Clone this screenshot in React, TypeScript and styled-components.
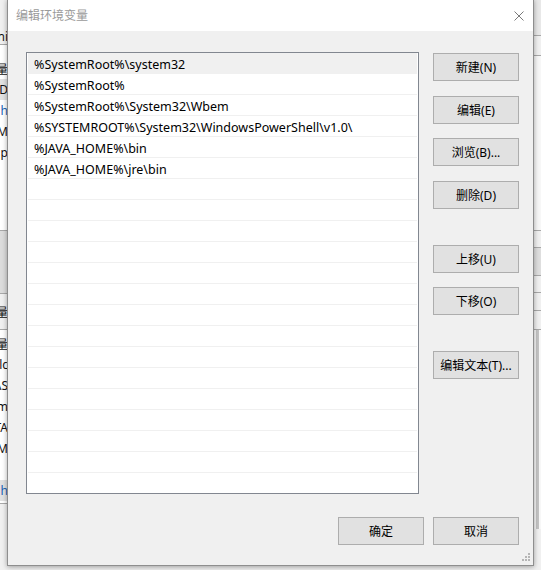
import React from "react";
import styled, { createGlobalStyle } from "styled-components";

const GlobalStyle = createGlobalStyle`
  html, body { margin: 0; padding: 0; }
  body {
    width: 541px;
    height: 570px;
    overflow: hidden;
    background: #f0f0f0;
    font-family: "Noto Sans", "Noto Sans CJK SC", sans-serif;
    font-size: 12px;
  }
  * { box-sizing: border-box; }
`;

const UI_FONT = `"Noto Sans", "Noto Sans CJK SC", sans-serif`;

/* ---------- background window (the 环境变量 dialog behind) ---------- */

const Desktop = styled.div`
  position: relative;
  width: 541px;
  height: 570px;
  overflow: hidden;
  background: #ececec;
`;

const BackWindow = styled.div`
  display: flex;
  justify-content: space-between;
  width: 541px;
  height: 570px;
  background: #f0f0f0;
`;

const BackPane = styled.div<{ $w: number }>`
  width: ${(p) => p.$w}px;
  display: flex;
  flex-direction: column;
  overflow: hidden;
`;

const BackBlock = styled.div<{ $h: number; $bg?: string; $line?: boolean; $lineTop?: boolean }>`
  height: ${(p) => p.$h}px;
  flex: none;
  background: ${(p) => p.$bg ?? "transparent"};
  border-bottom: ${(p) => (p.$line ? "1px solid #a8a8a8" : "none")};
  border-top: ${(p) => (p.$lineTop ? "1px solid #a8a8a8" : "none")};
  display: flex;
  flex-direction: column;
`;

const BackRow = styled.div<{ $sel?: boolean; $blue?: boolean }>`
  height: 21px;
  flex: none;
  display: flex;
  justify-content: flex-end;
  align-items: center;
  white-space: nowrap;
  font-family: ${UI_FONT};
  font-size: 12px;
  color: ${(p) => (p.$blue ? "#1a5fb4" : "#111")};
  background: ${(p) => (p.$sel ? "#e2e2e2" : "transparent")};
`;

const BackScroll = styled.div`
  margin-left: 2px;
  width: 3px;
  flex: 1;
  background: #c4c4c4;
`;

/* ---------- the dialog ---------- */

const Dialog = styled.div`
  position: absolute;
  left: 7px;
  top: -1px;
  width: 527px;
  height: 567px;
  border: 1px solid #8e8e8e;
  background: #f0f0f0;
  box-shadow: 0 1px 5px rgba(0, 0, 0, 0.35);
  display: flex;
  flex-direction: column;
  font-family: ${UI_FONT};
`;

const TitleBar = styled.div`
  height: 31px;
  flex: none;
  background: #ffffff;
  display: flex;
  align-items: center;
  padding-left: 8px;
  padding-right: 9px;
`;

const Title = styled.span`
  font-size: 12px;
  color: #9a9a9a;
  line-height: 16px;
`;

const CloseIcon = styled.svg`
  margin-left: auto;
  width: 10px;
  height: 10px;
  flex: none;
`;

const Body = styled.div`
  flex: 1;
  display: flex;
  flex-direction: column;
  padding: 21px 14px 20px 18px;
`;

const MainRow = styled.div`
  height: 442px;
  flex: none;
  display: flex;
  gap: 14px;
`;

const ListBox = styled.div`
  width: 393px;
  height: 442px;
  border: 1px solid #828790;
  background: #ffffff;
  padding: 0 1px;
  overflow: hidden;
`;

const ListRow = styled.div<{ $sel?: boolean }>`
  height: 21px;
  border-bottom: 1px solid #f0f0f0;
  background: ${(p) => (p.$sel ? "#f0f0f0" : "#ffffff")};
  padding: 2px 0 0 6px;
  font-size: 12.5px;
  line-height: 20px;
  color: #000;
  white-space: nowrap;
`;

const ButtonColumn = styled.div`
  width: 86px;
  display: flex;
  flex-direction: column;
`;

const Button = styled.button<{ $gap?: number }>`
  width: 86px;
  height: 28px;
  flex: none;
  margin: ${(p) => p.$gap ?? 0}px 0 0 0;
  padding: 1px 0 0 0;
  border: 1px solid #adadad;
  background: #e1e1e1;
  color: #000;
  font-family: ${UI_FONT};
  font-size: 12px;
  line-height: 16px;
  cursor: default;
`;

const Footer = styled.div`
  margin-top: 23px;
  display: flex;
  justify-content: flex-end;
  gap: 9px;
`;

const Grip = styled.svg`
  position: absolute;
  right: 2px;
  bottom: 3px;
  width: 10px;
  height: 10px;
`;

const entries = [
  "%SystemRoot%\\system32",
  "%SystemRoot%",
  "%SystemRoot%\\System32\\Wbem",
  "%SYSTEMROOT%\\System32\\WindowsPowerShell\\v1.0\\",
  "%JAVA_HOME%\\bin",
  "%JAVA_HOME%\\jre\\bin",
];

const sideButtons: { label: string; gap: number }[] = [
  { label: "新建(N)", gap: 1 },
  { label: "编辑(E)", gap: 15 },
  { label: "浏览(B)...", gap: 14 },
  { label: "删除(D)", gap: 15 },
  { label: "上移(U)", gap: 36 },
  { label: "下移(O)", gap: 14 },
  { label: "编辑文本(T)...", gap: 36 },
];

export default function App() {
  const rows = Array.from({ length: 21 }, (_, i) => entries[i] ?? "");
  const dots: [number, number][] = [
    [8, 2],
    [5, 5],
    [8, 5],
    [2, 8],
    [5, 8],
    [8, 8],
  ];
  return (
    <>
      <GlobalStyle />
      <Desktop>
        <BackWindow>
          <BackPane $w={8}>
            <BackBlock $h={44}>
              <BackRow style={{ marginTop: 26 }}>ni</BackRow>
            </BackBlock>
            <BackBlock $h={187} $bg="#ffffff" $lineTop $line>
              <BackRow style={{ marginTop: 13 }}>量</BackRow>
              <BackRow $sel>eD</BackRow>
              <BackRow $blue>h</BackRow>
              <BackRow>M</BackRow>
              <BackRow>p</BackRow>
            </BackBlock>
            <BackBlock $h={63} $bg="#dcdcdc" $line />
            <BackBlock $h={35}>
              <BackRow style={{ marginTop: 7 }}>变量</BackRow>
            </BackBlock>
            <BackBlock $h={175} $bg="#ffffff" $lineTop $line>
              <BackRow style={{ marginTop: 3 }}>量</BackRow>
              <BackRow>lc</BackRow>
              <BackRow>AS</BackRow>
              <BackRow>m</BackRow>
              <BackRow>TA</BackRow>
              <BackRow>M</BackRow>
              <BackRow />
              <BackRow $sel $blue>h</BackRow>
            </BackBlock>
          </BackPane>
          <BackPane $w={7}>
            <BackBlock $h={36} $bg="#e8e8e8" $line />
            <BackBlock $h={19} />
            <BackBlock $h={176} $bg="#f7f7f7" $lineTop $line />
            <BackBlock $h={16} />
            <BackBlock $h={29} $bg="#dedede" $lineTop $line />
            <BackBlock $h={17} $line />
            <BackBlock $h={18} $line />
            <BackBlock $h={18} />
            <BackBlock $h={200} $bg="#f7f7f7" $lineTop>
              <BackScroll />
            </BackBlock>
          </BackPane>
        </BackWindow>

        <Dialog>
          <TitleBar>
            <Title>编辑环境变量</Title>
            <CloseIcon viewBox="0 0 10 10">
              <path d="M0.5 0.5 L9.5 9.5 M9.5 0.5 L0.5 9.5" stroke="#7a7a7a" strokeWidth="1" fill="none" />
            </CloseIcon>
          </TitleBar>
          <Body>
            <MainRow>
              <ListBox>
                {rows.map((t, i) => (
                  <ListRow key={i} $sel={i === 0}>
                    {t}
                  </ListRow>
                ))}
              </ListBox>
              <ButtonColumn>
                {sideButtons.map((b) => (
                  <Button key={b.label} $gap={b.gap}>
                    {b.label}
                  </Button>
                ))}
              </ButtonColumn>
            </MainRow>
            <Footer>
              <Button>确定</Button>
              <Button>取消</Button>
            </Footer>
          </Body>
          <Grip viewBox="0 0 10 10">
            {dots.map(([x, y], i) => (
              <rect key={i} x={x - 1} y={y - 1} width="2" height="2" fill="#b5b5b5" />
            ))}
          </Grip>
        </Dialog>
      </Desktop>
    </>
  );
}
